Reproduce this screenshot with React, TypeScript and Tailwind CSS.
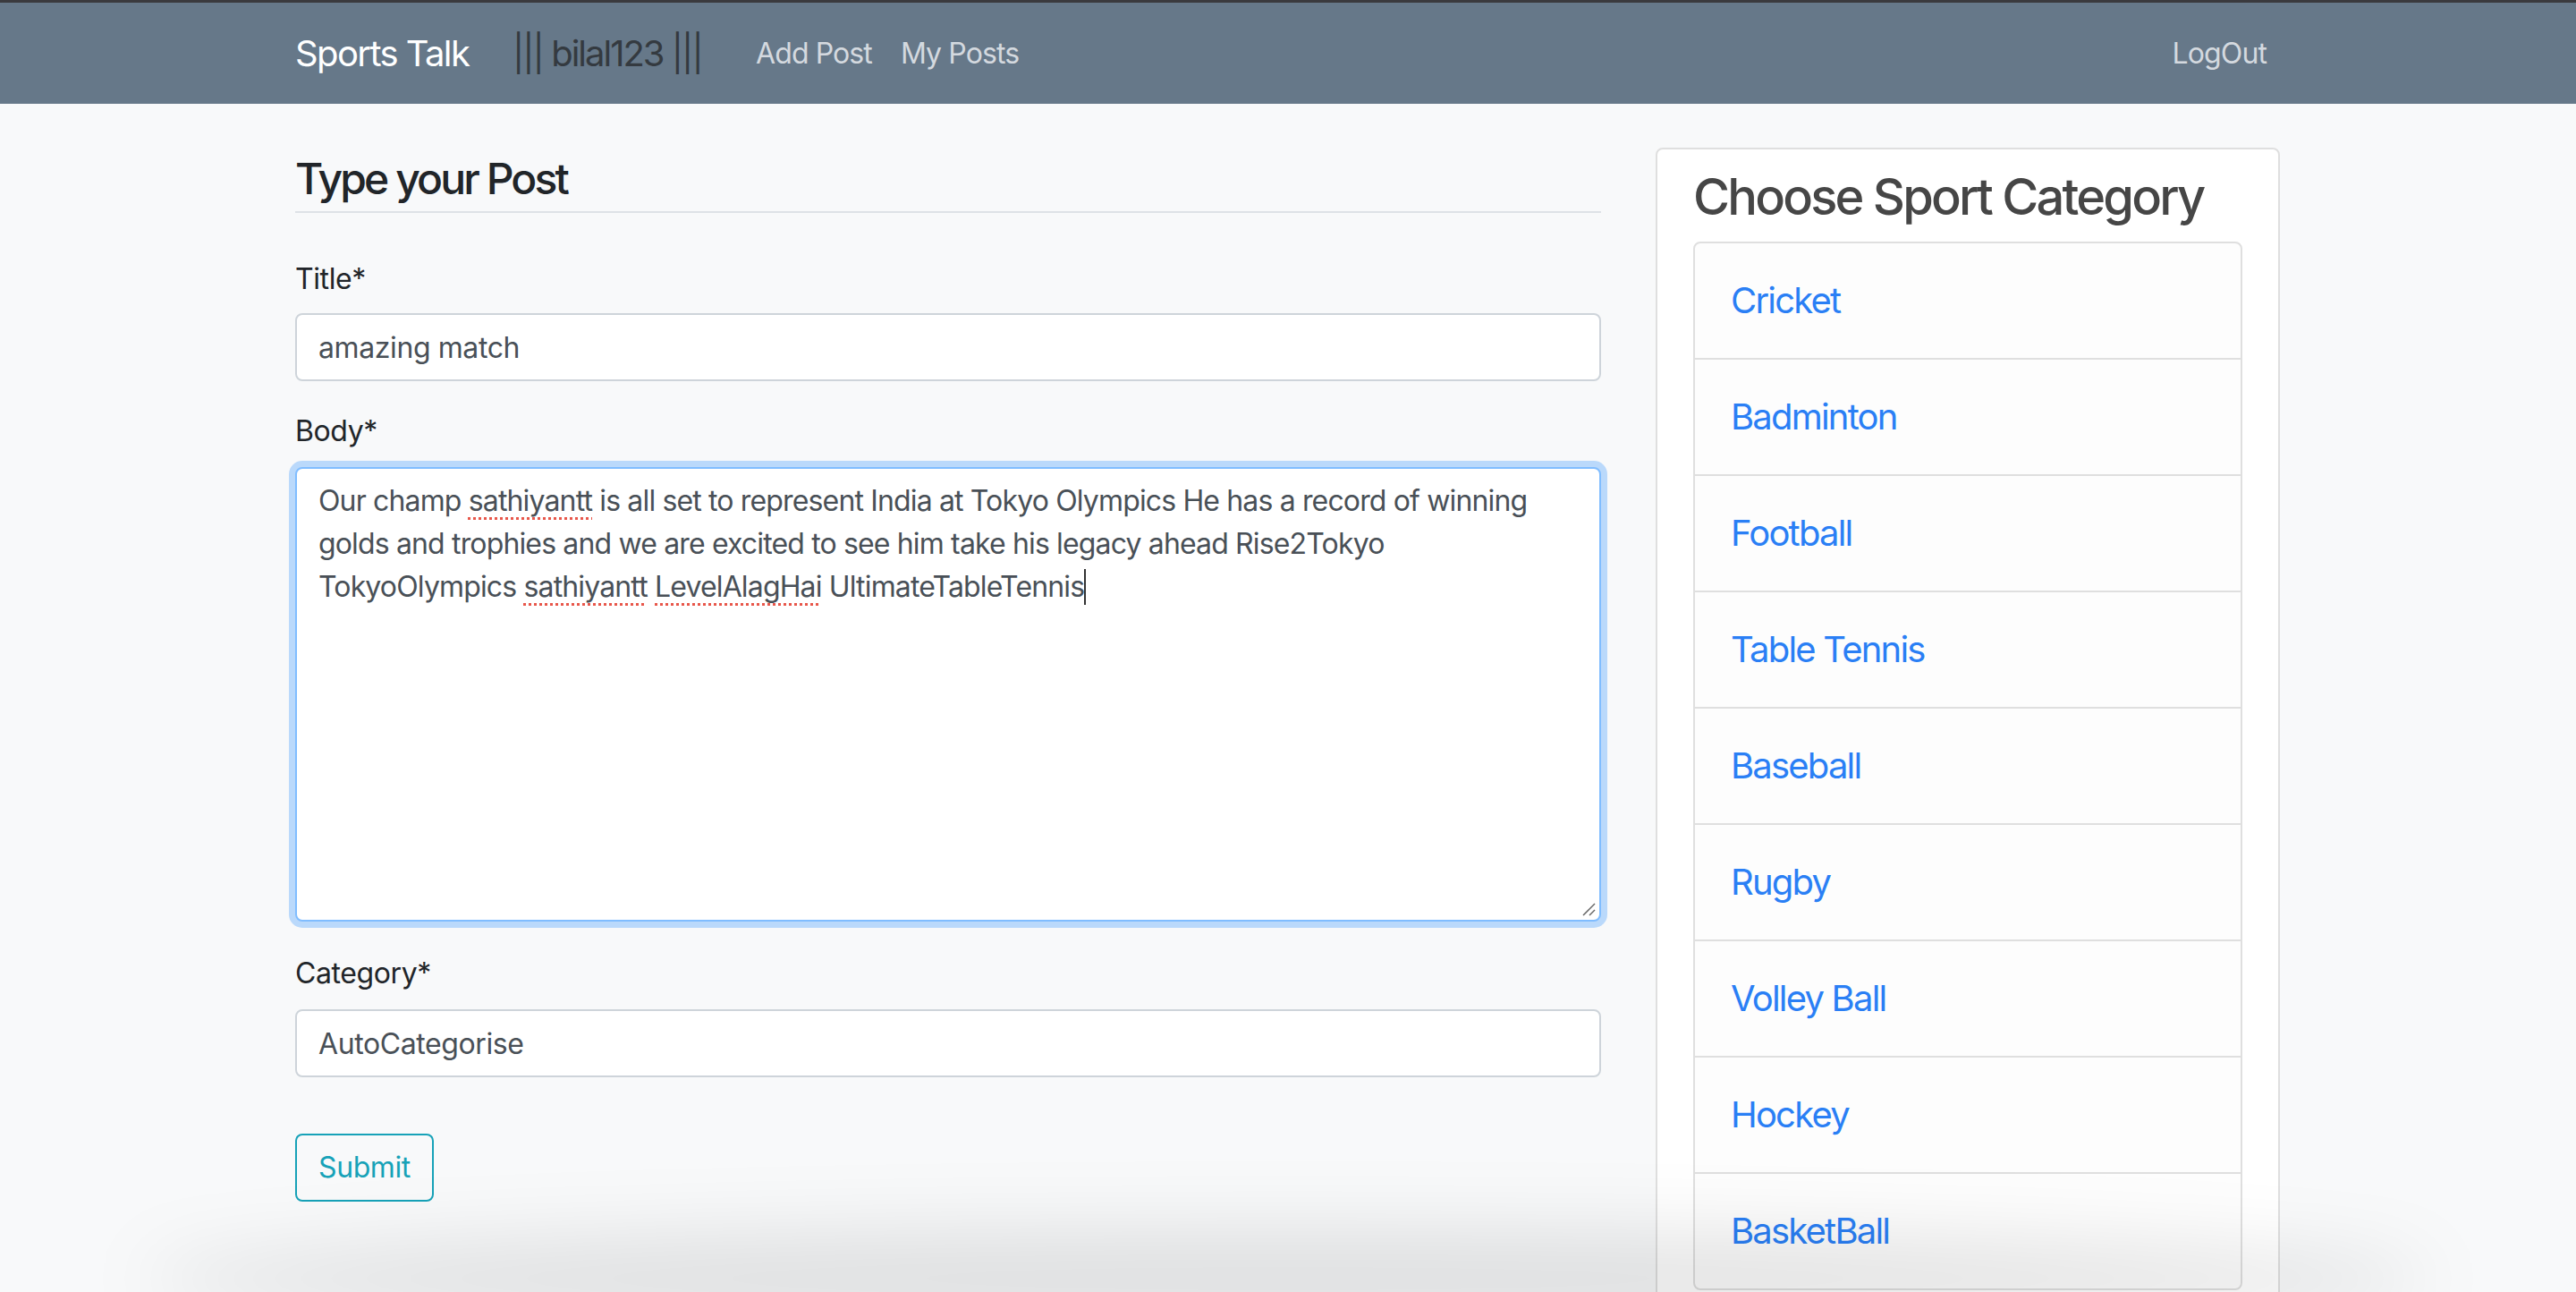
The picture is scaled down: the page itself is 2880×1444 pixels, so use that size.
import React from 'react';

const sports = [
  'Cricket',
  'Badminton',
  'Football',
  'Table Tennis',
  'Baseball',
  'Rugby',
  'Volley Ball',
  'Hockey',
  'BasketBall',
];

// red dotted underline, like the browser's spell check
function Misspelled({ children }: { children: React.ReactNode }) {
  return (
    <span className="underline decoration-dotted decoration-[#e8574b] decoration-[3px] underline-offset-[7px]">
      {children}
    </span>
  );
}

function Navbar() {
  return (
    <nav className="h-[116px] bg-[#667889] border-t-[3px] border-[#3a3a3e]">
      <div className="w-[2220px] mx-auto h-full flex items-center">
        <span className="w-[243px] text-[40px] leading-[60px] tracking-[-0.04em] text-white">Sports Talk</span>
        <span className="w-[256px] text-[40px] leading-[60px] tracking-[-0.05em] text-[#343a40]">||| bilal123 |||</span>
        <a className="px-[16px] text-[32px] leading-[48px] tracking-[-0.028em] text-[#d4d9df]">Add Post</a>
        <a className="px-[16px] text-[32px] leading-[48px] tracking-[-0.028em] text-[#d4d9df]">My Posts</a>
        <a className="ml-auto px-[16px] text-[32px] leading-[48px] tracking-[-0.028em] text-[#d4d9df]">LogOut</a>
      </div>
    </nav>
  );
}

function PostForm() {
  return (
    <div className="w-[1460px] shrink-0 tracking-[-0.025em]">
      <h4 className="mt-[6px] pb-[7px] border-b-2 border-[#dee2e6] text-[48px] leading-[58px] font-medium tracking-[-0.06em] text-[#212529]">
        Type your Post
      </h4>

      {/* Title */}
      <label className="block mt-[50px] mb-[14px] text-[32px] leading-[48px] text-[#212529]">Title*</label>
      <input
        readOnly
        value="amazing match"
        className="block w-full h-[76px] px-[24px] bg-white border-2 border-[#ced4da] rounded-[8px] text-[32px] text-[#495057] outline-none"
      />

      {/* Body */}
      <label className="block mt-[32px] mb-[16px] text-[32px] leading-[48px] text-[#212529]">Body*</label>
      <div className="relative h-[508px] px-[24px] py-[12px] bg-white border-2 border-[#80bdff] rounded-[8px] shadow-[0_0_0_7px_rgba(0,123,255,0.25)] text-[32px] leading-[48px] tracking-[-0.85px] text-[#495057]">
        <div className="whitespace-nowrap">
          Our champ <Misspelled>sathiyantt</Misspelled> is all set to represent India at Tokyo Olympics He has a record of winning
        </div>
        <div className="whitespace-nowrap">
          golds and trophies and we are excited to see him take his legacy ahead Rise2Tokyo
        </div>
        <div className="whitespace-nowrap flex items-center">
          <span>
            TokyoOlympics <Misspelled>sathiyantt</Misspelled> <Misspelled>LevelAlagHai</Misspelled> UltimateTableTennis
          </span>
          <span className="inline-block w-[2px] h-[40px] bg-[#333]" />
        </div>
        {/* resize grip */}
        <svg className="absolute right-[4px] bottom-[4px]" width="16" height="16" viewBox="0 0 16 16">
          <line x1="2" y1="15" x2="15" y2="2" stroke="#666" strokeWidth="1.5" />
          <line x1="9" y1="15" x2="15" y2="9" stroke="#666" strokeWidth="1.5" />
        </svg>
      </div>

      {/* Category */}
      <label className="block mt-[34px] mb-[16px] text-[32px] leading-[48px] text-[#212529]">Category*</label>
      <input
        readOnly
        value="AutoCategorise"
        className="block w-full h-[76px] px-[24px] bg-white border-2 border-[#ced4da] rounded-[8px] text-[32px] text-[#495057] outline-none"
      />

      <button className="mt-[63px] h-[76px] px-[24px] border-2 border-[#17a2b8] rounded-[8px] text-[32px] text-[#17a2b8]">
        Submit
      </button>
    </div>
  );
}

function CategoryCard() {
  return (
    <div className="w-[698px] shrink-0 self-start bg-white border-2 border-[#dfdfdf] rounded-[8px] pt-[20px] pb-[40px] px-[40px]">
      <h3 className="mb-[16px] whitespace-nowrap text-[56px] leading-[67px] font-medium tracking-[-0.05em] text-[#464646]">
        Choose Sport Category
      </h3>
      <ul className="border-2 border-[#dfdfdf] rounded-[8px] bg-[#fdfdfd]">
        {sports.map((s, i) => (
          <li
            key={s}
            className={`px-[40px] py-[34px] text-[40px] leading-[60px] tracking-[-0.045em] text-[#2a7ff5] ${i > 0 ? 'border-t-2 border-[#dfdfdf]' : ''}`}
          >
            {s}
          </li>
        ))}
      </ul>
    </div>
  );
}

export default function App() {
  return (
    <div className="relative h-[1444px] overflow-hidden bg-[#f8f9fa] font-['Inter','Noto_Sans',sans-serif]">
      <Navbar />
      <main className="w-[2220px] mx-auto flex gap-[61px] pt-[49px]">
        <PostForm />
        <CategoryCard />
      </main>
      {/* soft shadow at the bottom edge of the window */}
      <div className="pointer-events-none absolute -bottom-[40px] left-[160px] right-[160px] h-[110px] rounded-[50%] bg-black/[0.1] blur-2xl" />
    </div>
  );
}
